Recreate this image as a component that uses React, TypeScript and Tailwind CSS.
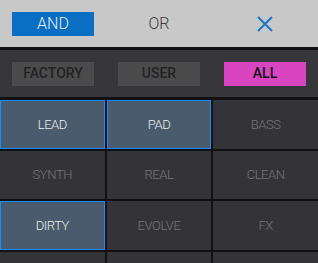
import React from "react";

const cells: { label: string; sel: boolean }[] = [
  { label: "LEAD", sel: true },
  { label: "PAD", sel: true },
  { label: "BASS", sel: false },
  { label: "SYNTH", sel: false },
  { label: "REAL", sel: false },
  { label: "CLEAN", sel: false },
  { label: "DIRTY", sel: true },
  { label: "EVOLVE", sel: false },
  { label: "FX", sel: false },
  { label: "", sel: false },
  { label: "", sel: false },
  { label: "", sel: false },
];

export default function App() {
  return (
    <div
      className="w-[318px] h-[263px] overflow-hidden bg-[#111113]"
      style={{ fontFamily: "Roboto, 'Open Sans', sans-serif" }}
    >
      <div className="h-[47px] bg-[#c8c8c8] grid grid-cols-3 gap-[24px] px-[12px] items-center">
        <div className="h-[24px] bg-[#0a6fc2] flex items-center justify-center text-[16px] font-light text-[#e4ecf5]">
          AND
        </div>
        <div className="h-[24px] flex items-center justify-center text-[16px] font-light text-[#3c3c3c]">
          OR
        </div>
        <div className="h-[24px] flex items-center justify-center">
          <svg width="16" height="16" viewBox="0 0 16 16">
            <path d="M1 1 L15 15 M15 1 L1 15" stroke="#1a78c8" strokeWidth="2" fill="none" />
          </svg>
        </div>
      </div>
      <div className="mt-[3px] h-[47px] bg-[#36363b] grid grid-cols-3 gap-[24px] px-[12px] items-center">
        <div className="h-[24px] bg-[#4b4b4b] flex items-center justify-center text-[14px] font-medium text-[#222224]">
          FACTORY
        </div>
        <div className="h-[24px] bg-[#4b4b4b] flex items-center justify-center text-[14px] font-medium text-[#222224]">
          USER
        </div>
        <div className="h-[24px] bg-[#d944c0] flex items-center justify-center text-[14px] font-medium text-[#111111]">
          ALL
        </div>
      </div>
      <div className="mt-[3px] grid grid-cols-3 gap-[2px] auto-rows-[48.5px]">
        {cells.map((c, i) => (
          <div
            key={i}
            className={
              c.sel
                ? "bg-[#4a5b6d] border-[1.5px] border-[#168cff] flex items-center justify-center text-[13px] tracking-[-0.4px] font-light text-[#ececec]"
                : "bg-[#343438] flex items-center justify-center text-[13px] tracking-[-0.4px] font-light text-[#747476]"
            }
          >
            {c.label}
          </div>
        ))}
      </div>
    </div>
  );
}
